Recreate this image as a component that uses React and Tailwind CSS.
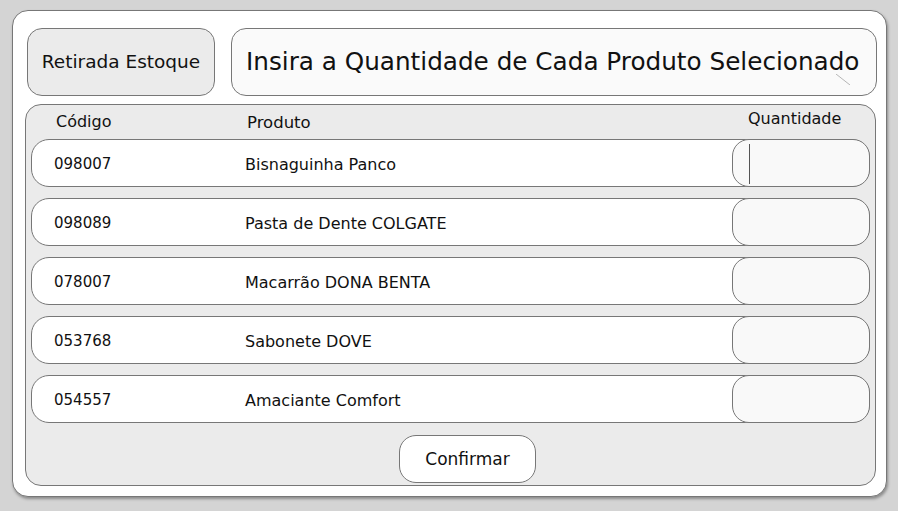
const rows = [
  { code: '098007', name: 'Bisnaguinha Panco', focused: true },
  { code: '098089', name: 'Pasta de Dente COLGATE' },
  { code: '078007', name: 'Macarrão DONA BENTA' },
  { code: '053768', name: 'Sabonete DOVE' },
  { code: '054557', name: 'Amaciante Comfort' },
];

const ProdutoRow = ({ code, name, focused }) => (
  <div className="flex h-[48px] items-center rounded-[18px] border border-[#777] bg-white">
    <div className="w-[213px] pl-[22px] pt-[3px] text-[15px]">{code}</div>
    <div className="flex-1 pt-[3px] text-[16px]">{name}</div>
    <div className="relative -my-px -mr-px h-[48px] w-[138px] rounded-[17px] border border-[#777] bg-[#f9f9f9]">
      {focused && <div className="absolute left-[16px] top-[4px] h-[40px] w-px bg-[#555]" />}
    </div>
  </div>
);

export default function App() {
  return (
    <div
      className="h-[511px] w-[898px] bg-[#d4d4d4] pl-[12px] pt-[10px] text-[16px] text-[#111]"
      style={{ fontFamily: '"DejaVu Sans", sans-serif' }}
    >
      <div className="flex h-[487px] w-[875px] flex-col rounded-[16px] border border-[#777] bg-white pb-[10px] pl-[12px] pr-[10px] pt-[17px] shadow-[1px_2px_3px_rgba(0,0,0,0.35)]">
        <div className="-mr-px ml-[2px] flex h-[68px] gap-[16px]">
          <div className="flex w-[188px] items-center justify-center rounded-[15px] border border-[#777] bg-[#ebebeb] text-[18.5px]">
            Retirada Estoque
          </div>
          <div className="relative flex flex-1 items-center rounded-[15px] border border-[#777] bg-[#fafafa] pl-[14px] text-[24.7px]">
            Insira a Quantidade de Cada Produto Selecionado
            <svg className="absolute bottom-[10px] right-[26px]" width="14" height="11" viewBox="0 0 14 11">
              <line x1="0" y1="0" x2="14" y2="11" stroke="#b5b5b5" strokeWidth="1" />
            </svg>
          </div>
        </div>

        <div className="mt-[8px] flex flex-1 flex-col rounded-[16px] border border-[#777] bg-[#ebebeb] px-[5px] pb-[2px]">
          <div className="flex h-[34px] items-center">
            <div className="w-[216px] pl-[25px]">Código</div>
            <div className="flex-1 pt-[2px] text-[16.5px]">Produto</div>
            <div className="w-[122px] -translate-y-[3px]">Quantidade</div>
          </div>
          <div className="flex flex-col gap-[11px]">
            {rows.map((r) => (
              <ProdutoRow key={r.code} {...r} />
            ))}
          </div>
          <div className="mt-[12px] flex">
            <button className="ml-[368px] h-[48px] w-[137px] rounded-[17px] border border-[#777] bg-white pt-[2px] text-[17px]">
              Confirmar
            </button>
          </div>
        </div>
      </div>
    </div>
  );
}
